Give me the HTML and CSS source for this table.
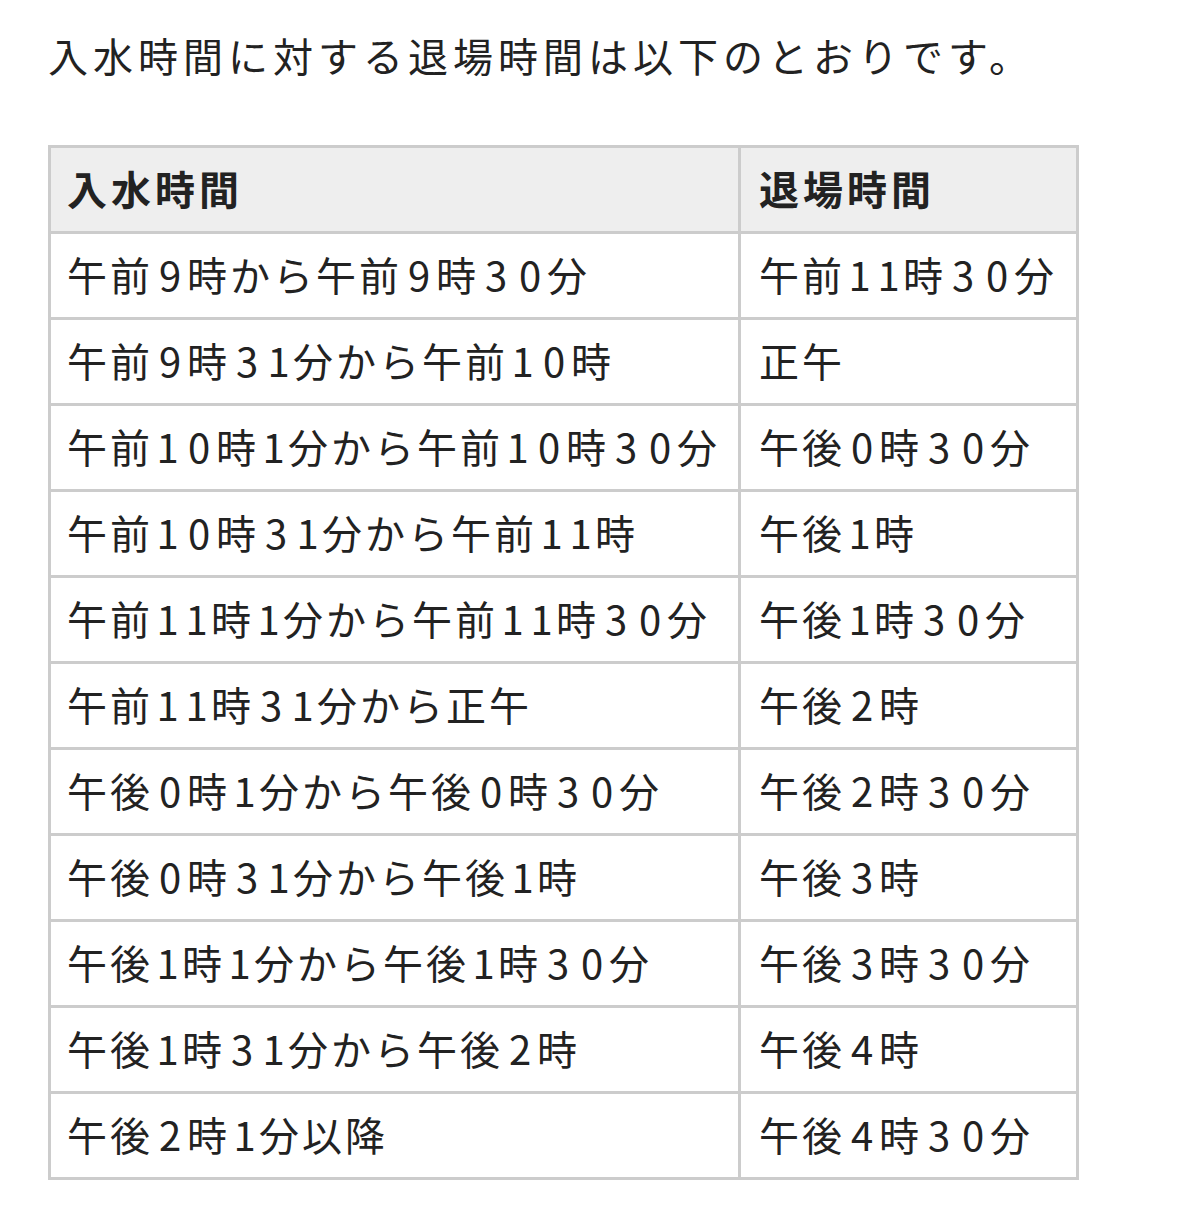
FILE: index.html
```html
<!DOCTYPE html>
<html lang="ja">
<head>
<meta charset="utf-8">
<link rel="stylesheet" href="styles.css">
</head>
<body>
<p class="intro">入水時間に対する退場時間は以下のとおりです。</p>
<table class="times">
  <colgroup><col class="c1"><col class="c2"></colgroup>
  <thead>
    <tr><th>入水時間</th><th>退場時間</th></tr>
  </thead>
  <tbody>
    <tr>
      <td>午前<span class="d">9</span>時から午前<span class="d">9</span>時<span class="d">3</span><span class="d">0</span>分</td>
      <td>午前<span class="d n1">1</span><span class="d n1">1</span>時<span class="d">3</span><span class="d">0</span>分</td>
    </tr>
    <tr>
      <td>午前<span class="d">9</span>時<span class="d">3</span><span class="d n1">1</span>分から午前<span class="d n1">1</span><span class="d">0</span>時</td>
      <td>正午</td>
    </tr>
    <tr>
      <td>午前<span class="d n1">1</span><span class="d">0</span>時<span class="d n1">1</span>分から午前<span class="d n1">1</span><span class="d">0</span>時<span class="d">3</span><span class="d">0</span>分</td>
      <td>午後<span class="d">0</span>時<span class="d">3</span><span class="d">0</span>分</td>
    </tr>
    <tr>
      <td>午前<span class="d n1">1</span><span class="d">0</span>時<span class="d">3</span><span class="d n1">1</span>分から午前<span class="d n1">1</span><span class="d n1">1</span>時</td>
      <td>午後<span class="d n1">1</span>時</td>
    </tr>
    <tr>
      <td>午前<span class="d n1">1</span><span class="d n1">1</span>時<span class="d n1">1</span>分から午前<span class="d n1">1</span><span class="d n1">1</span>時<span class="d">3</span><span class="d">0</span>分</td>
      <td>午後<span class="d n1">1</span>時<span class="d">3</span><span class="d">0</span>分</td>
    </tr>
    <tr>
      <td>午前<span class="d n1">1</span><span class="d n1">1</span>時<span class="d">3</span><span class="d n1">1</span>分から正午</td>
      <td>午後<span class="d">2</span>時</td>
    </tr>
    <tr>
      <td>午後<span class="d">0</span>時<span class="d n1">1</span>分から午後<span class="d">0</span>時<span class="d">3</span><span class="d">0</span>分</td>
      <td>午後<span class="d">2</span>時<span class="d">3</span><span class="d">0</span>分</td>
    </tr>
    <tr>
      <td>午後<span class="d">0</span>時<span class="d">3</span><span class="d n1">1</span>分から午後<span class="d n1">1</span>時</td>
      <td>午後<span class="d">3</span>時</td>
    </tr>
    <tr>
      <td>午後<span class="d n1">1</span>時<span class="d n1">1</span>分から午後<span class="d n1">1</span>時<span class="d">3</span><span class="d">0</span>分</td>
      <td>午後<span class="d">3</span>時<span class="d">3</span><span class="d">0</span>分</td>
    </tr>
    <tr>
      <td>午後<span class="d n1">1</span>時<span class="d">3</span><span class="d n1">1</span>分から午後<span class="d">2</span>時</td>
      <td>午後<span class="d">4</span>時</td>
    </tr>
    <tr>
      <td>午後<span class="d">2</span>時<span class="d n1">1</span>分以降</td>
      <td>午後<span class="d">4</span>時<span class="d">3</span><span class="d">0</span>分</td>
    </tr>
  </tbody>
</table>
</body>
</html>
```
FILE: styles.css
```css
html, body {
  margin: 0;
  padding: 0;
  background: #ffffff;
}
body {
  padding: 0 0 0 48px;
  font-family: "Noto Sans CJK JP", "Noto Sans", sans-serif;
  color: #222222;
}
.intro {
  margin: 24px 0 0 0;
  font-size: 40px;
  line-height: 63px;
  letter-spacing: 5px;
}
.times {
  margin-top: 58px;
  border-collapse: collapse;
  table-layout: fixed;
  width: 1028px;
  border: 3px solid #cccccc;
}
.c1 { width: 690px; }
.c2 { width: 338px; }
.times th,
.times td {
  border: 3px solid #cccccc;
  padding: 0 0 4px 16px;
  text-align: left;
  font-size: 40px;
  letter-spacing: 3px;
  line-height: 50px;
  white-space: nowrap;
  height: 86px;
  box-sizing: border-box;
}
.times td + td,
.times th + th {
  padding-left: 18px;
}
.times th {
  background: #eeeeee;
  font-weight: 700;
  letter-spacing: 4px;
  height: 86px;
}
.times td {
  font-weight: 400;
}
.d {
  display: inline-block;
  width: 34px;
  text-align: center;
  letter-spacing: 0;
}
.d.n1 {
  width: 29px;
}
```
